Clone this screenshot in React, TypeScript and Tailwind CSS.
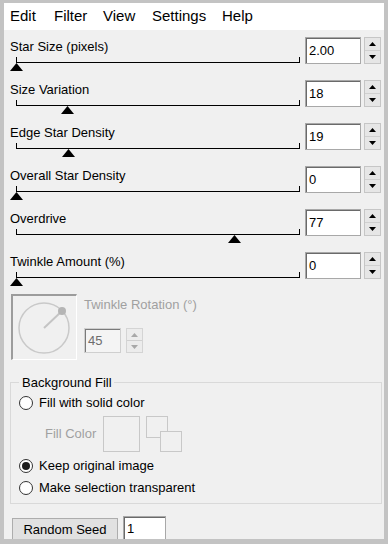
import React from "react";

const FONT = { fontFamily: '"Liberation Sans", Arial, sans-serif' };

const rows = [
  { label: "Star Size (pixels)", value: "2.00", pos: 0 },
  { label: "Size Variation", value: "18", pos: 0.18 },
  { label: "Edge Star Density", value: "19", pos: 0.185 },
  { label: "Overall Star Density", value: "0", pos: 0 },
  { label: "Overdrive", value: "77", pos: 0.77 },
  { label: "Twinkle Amount (%)", value: "0", pos: 0 },
];

const menu = [
  { label: "Edit", w: "w-[44px]" },
  { label: "Filter", w: "w-[49px]" },
  { label: "View", w: "w-[49px]" },
  { label: "Settings", w: "w-[70px]" },
  { label: "Help", w: "w-[40px]" },
];

function Arrow({ down, color = "#000" }: { down?: boolean; color?: string }) {
  return (
    <svg width="7" height="4" viewBox="0 0 7 4">
      <polygon points={down ? "0,0 7,0 3.5,4" : "3.5,0 7,4 0,4"} fill={color} />
    </svg>
  );
}

function Spin({ disabled }: { disabled?: boolean }) {
  const c = disabled ? "#a8a8a8" : "#000";
  return (
    <div
      className={`flex w-[17px] flex-col border ${
        disabled ? "border-[#d4d4d4] bg-[#ececec]" : "border-[#c6c6c6] bg-[#e6e6e6]"
      }`}
    >
      <div className="flex flex-1 items-center justify-center border-b border-[#d0d0d0]">
        <Arrow color={c} />
      </div>
      <div className="flex flex-1 items-center justify-center">
        <Arrow down color={c} />
      </div>
    </div>
  );
}

function Radio({ checked, label }: { checked?: boolean; label: string }) {
  return (
    <div className="flex h-[20px] items-center">
      <span className="ml-[8px] flex h-[14px] w-[14px] items-center justify-center rounded-full border border-[#333] bg-white">
        {checked && <span className="h-[8px] w-[8px] rounded-full bg-[#1b1b1b]" />}
      </span>
      <span className="ml-[6px] text-[13px] leading-[16px] text-black">{label}</span>
    </div>
  );
}

function SliderRow({ label, value, pos }: { label: string; value: string; pos: number }) {
  const left = Math.round(pos * 283) - 7;
  return (
    <div className="flex h-[43px]">
      <div className="w-[301px]">
        <div className="pl-[6px] pt-[4px] text-[13px] leading-[16px] text-black">{label}</div>
        <div className="relative ml-[12px] mt-[2px] h-[6px] w-[284px] border-x border-b border-black">
          <svg
            className="absolute top-[6px]"
            style={{ left }}
            width="13"
            height="8"
            viewBox="0 0 13 8"
          >
            <polygon points="6.5,0 13,8 0,8" fill="#000" />
          </svg>
        </div>
      </div>
      <div className="mt-[2px] flex h-[27px]">
        <div className="flex w-[56px] items-center border border-[#a8a8a8] bg-white pl-[3px] text-[13px] text-black shadow-[inset_1px_1px_0_#6a6a6a]">
          {value}
        </div>
        <div className="ml-[3px] flex">
          <Spin />
        </div>
      </div>
    </div>
  );
}

export default function App() {
  return (
    <div className="h-[544px] w-[388px] bg-[#c3c3c3] pb-[5px] pl-[4px] pr-[4px] pt-[3px]" style={FONT}>
      <div className="h-[536px] w-[380px] overflow-hidden bg-[#f0f0f0]">
        {/* menu */}
        <div className="flex h-[27px] items-center bg-white pl-[6px] text-[15px] text-black">
          {menu.map((m) => (
            <span key={m.label} className={m.w}>
              {m.label}
            </span>
          ))}
        </div>

        <div className="pt-[5px]">
          {rows.map((r) => (
            <SliderRow key={r.label} {...r} />
          ))}
        </div>

        {/* twinkle rotation */}
        <div className="ml-[7px] mt-[1px] flex">
          <div className="h-[66px] w-[66px] border-b border-l-2 border-r border-t-2 border-b-white border-l-[#9c9c9c] border-r-white border-t-[#9c9c9c]">
            <svg width="63" height="63" viewBox="0 0 63 63">
              <circle cx="31" cy="32" r="25" fill="none" stroke="#c9c9c9" strokeWidth="1.5" />
              <line x1="31" y1="32" x2="49" y2="15" stroke="#c4c4c4" strokeWidth="2" />
              <circle cx="49" cy="15" r="4" fill="#b5b5b5" />
            </svg>
          </div>
          <div className="ml-[7px]">
            <div className="pt-[3px] text-[13px] leading-[16px] text-[#a0a0a0]">Twinkle Rotation (°)</div>
            <div className="mt-[15px] flex h-[25px]">
              <div className="flex w-[37px] items-center border border-[#cfcfcf] bg-[#f4f4f4] pl-[3px] text-[13px] text-[#6d6d6d] shadow-[inset_1px_1px_0_#7a7a7a]">
                45
              </div>
              <div className="ml-[5px] flex">
                <Spin disabled />
              </div>
            </div>
          </div>
        </div>

        {/* background fill */}
        <fieldset className="ml-[6px] mt-[14px] w-[372px] border border-[#d9d9d9] pb-[5px]">
          <legend className="ml-[8px] pl-[3px] pr-[2px] text-[13px] leading-[17px] text-black">Background Fill</legend>
          <div className="mt-[2px]">
            <Radio label="Fill with solid color" />
          </div>
          <div className="mt-[3px] flex h-[36px] items-center">
            <span className="ml-[34px] text-[13px] text-[#a0a0a0]">Fill Color</span>
            <div className="ml-[7px] h-[36px] w-[37px] border border-[#c8c8c8]" />
            <div className="relative ml-[6px] h-[36px] w-[37px]">
              <div className="absolute left-0 top-0 h-[22px] w-[22px] border border-[#c8c8c8]" />
              <div className="absolute left-[14px] top-[15px] h-[21px] w-[22px] border border-[#c8c8c8] bg-[#f0f0f0]" />
            </div>
          </div>
          <div className="mt-[4px]">
            <Radio checked label="Keep original image" />
          </div>
          <div className="mt-[2px]">
            <Radio label="Make selection transparent" />
          </div>
        </fieldset>

        {/* random seed */}
        <div className="ml-[8px] mt-[12px] flex items-start">
          <div className="mt-[2px] flex h-[23px] w-[106px] items-center justify-center border border-[#adadad] bg-[#e1e1e1] text-[13px] text-black">
            Random Seed
          </div>
          <div className="ml-[5px] flex h-[25px] w-[43px] items-center border border-[#a8a8a8] bg-white pl-[3px] text-[13px] text-black shadow-[inset_1px_1px_0_#6a6a6a]">
            1
          </div>
        </div>
      </div>
    </div>
  );
}
